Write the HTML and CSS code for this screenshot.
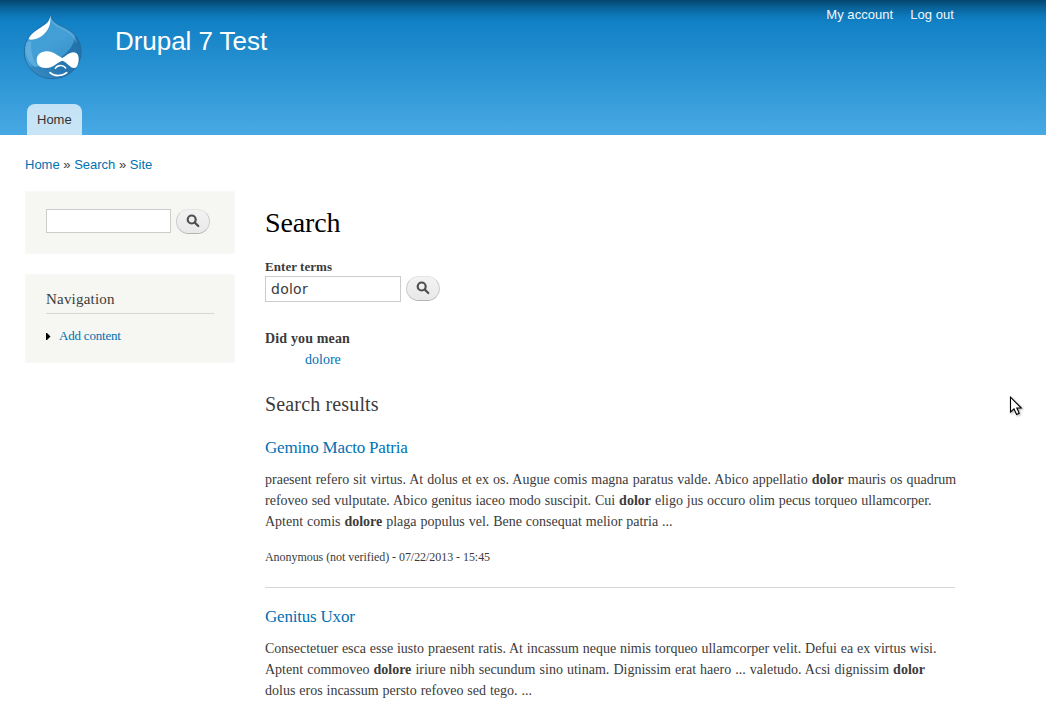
FILE: index.html
```
<!DOCTYPE html>
<html lang="en">
<head>
<meta charset="utf-8">
<title>Search | Drupal 7 Test</title>
<link rel="stylesheet" href="styles.css">
</head>
<body>
<header class="header">
  <div class="branding">
    <svg class="logo" viewBox="0 0 240 240" role="img" aria-label="Home">
      <defs>
        <linearGradient id="drop" x1="0.1" y1="0" x2="0.7" y2="1">
          <stop offset="0" stop-color="#3d9bd4"/>
          <stop offset="0.5" stop-color="#439fd6"/>
          <stop offset="1" stop-color="#3488c0"/>
        </linearGradient>
        <linearGradient id="shade" x1="1" y1="0" x2="0" y2="1">
          <stop offset="0" stop-color="#1d69a3"/>
          <stop offset="0.6" stop-color="#2473ac"/>
          <stop offset="1" stop-color="#3c8fc6"/>
        </linearGradient>
        <clipPath id="body"><path d="M107 30C111 48 125 57 148 67C180 82 198 108 198 140C198 188 159 221 112 221C65 221 28 185 28 141C28 103 51 82 75 66C93 55 105 48 105 30Z"/></clipPath>
      </defs>
      <g clip-path="url(#body)">
        <rect width="240" height="240" fill="url(#drop)"/>
        <path d="M180 92C180 118 158 145 122 168C96 184 68 188 46 184L60 225H205V90Z" fill="url(#shade)" opacity=".85"/>
        <path d="M30 112C28 150 40 172 60 186L72 184C55 168 46 145 49 108Z" fill="#8fcbed" opacity=".35"/>
        <path d="M110 50C116 60 138 68 152 76C172 88 182 100 184 112" fill="none" stroke="#7fc0e6" stroke-width="4" opacity=".4"/>
      </g>
      <path d="M107 30C111 48 125 57 148 67C180 82 198 108 198 140C198 188 159 221 112 221C65 221 28 185 28 141C28 103 51 82 75 66C93 55 105 48 105 30Z" fill="none" stroke="#1d659a" stroke-width="3" opacity=".8"/>
      <path d="M106 31C105 49 94 58 77 68C57 80 42 93 41 103C56 107 73 99 85 89C99 77 109 60 106 31Z" fill="#fff"/>
      <path d="M95 139C113 138 128 153 142 159C152 155 161 142 176 142C187 143 191 151 191 162C191 175 187 189 178 189C165 189 156 171 142 167C127 171 117 188 94 189C76 190 65 180 65 165C65 150 77 140 95 139Z" fill="#fff"/>
      <path d="M121 190C128 179 145 179 152 189" fill="none" stroke="#fff" stroke-width="4.5" stroke-linecap="round"/>
      <path d="M105 203C117 215 142 214 155 203" fill="none" stroke="#fff" stroke-width="5" stroke-linecap="round"/>
    </svg>
    <a class="site-name">Drupal 7 Test</a>
    <nav class="user-menu"><a>My account</a><a>Log out</a></nav>
  </div>
  <nav class="tabs"><a class="tab">Home</a></nav>
</header>
<nav class="breadcrumb"><a class="link">Home</a> » <a class="link">Search</a> » <a class="link">Site</a></nav>
<div class="columns">
  <aside class="sidebar">
    <form class="block search-block">
      <input class="field" type="text" aria-label="Search">
      <button class="search-button" type="button" aria-label="Search"><svg class="lens" viewBox="0 0 14 14"><circle cx="5.7" cy="5.5" r="4"/><path d="M8.8 8.6L12.3 12"/></svg></button>
    </form>
    <section class="block">
      <h2 class="block-title">Navigation</h2>
      <div class="menu-item"><svg class="arrow" viewBox="0 0 5 7"><path d="M0 0H1L4.5 3.5L1 7H0Z"/></svg><a class="link">Add content</a></div>
    </section>
  </aside>
  <main class="content">
    <h1 class="page-title">Search</h1>
    <form>
      <label class="label" for="terms">Enter terms</label>
      <div class="search-row">
        <input class="field terms" id="terms" type="text" value="dolor">
        <button class="search-button" type="button" aria-label="Search"><svg class="lens" viewBox="0 0 14 14"><circle cx="5.7" cy="5.5" r="4"/><path d="M8.8 8.6L12.3 12"/></svg></button>
      </div>
    </form>
    <dl class="suggestion"><dt>Did you mean</dt><dd><a class="link">dolore</a></dd></dl>
    <h2 class="results-title">Search results</h2>
    <article class="result">
      <h3 class="result-title"><a class="link">Gemino Macto Patria</a></h3>
      <p class="snippet"><span class="line loose">praesent refero sit virtus. At dolus et ex os. Augue comis magna paratus valde. Abico appellatio <strong>dolor</strong> mauris os quadrum</span>
      <span class="line">refoveo sed vulputate. Abico genitus iaceo modo suscipit. Cui <strong>dolor</strong> eligo jus occuro olim pecus torqueo ullamcorper.</span>
      <span class="line">Aptent comis <strong>dolore</strong> plaga populus vel. Bene consequat melior patria ...</span></p>
      <p class="info">Anonymous (not verified) - 07/22/2013 - 15:45</p>
    </article>
    <article class="result">
      <h3 class="result-title"><a class="link">Genitus Uxor</a></h3>
      <p class="snippet"><span class="line snug">Consectetuer esca esse iusto praesent ratis. At incassum neque nimis torqueo ullamcorper velit. Defui ea ex virtus wisi.</span>
      <span class="line loose">Aptent commoveo <strong>dolore</strong> iriure nibh secundum sino utinam. Dignissim erat haero ... valetudo. Acsi dignissim <strong>dolor</strong></span>
      <span class="line">dolus eros incassum persto refoveo sed tego. ...</span></p>
    </article>
  </main>
</div>
<svg class="pointer" viewBox="0 0 14 20"><path d="M1.5 1.2V16L5 12.8L7.6 18.5L10.2 17.3L7.8 12H12.3Z"/></svg>
</body>
</html>
```
FILE: styles.css
```
* { box-sizing: border-box; }
body {
  margin: 0;
  height: 708px;
  overflow: hidden;
  background: #fff;
  color: #3b3b3b;
  font: 14px/21px "Liberation Serif", serif;
}
h1, h2, h3, p, dl, dd { margin: 0; font-weight: normal; }
.link { color: #0071b3; }

.header {
  display: flex;
  flex-direction: column;
  justify-content: space-between;
  height: 135px;
  background:
    linear-gradient(rgba(0, 0, 0, .42), rgba(0, 0, 0, .2) 8px, rgba(0, 0, 0, .05) 16px, transparent 22px),
    linear-gradient(#0779bf, #48a9e4);
  font-family: "Liberation Sans", sans-serif;
}
.branding { display: flex; align-items: flex-start; padding: 5px 92px 0 15px; }
.logo { width: 80px; height: 80px; }
.site-name { margin: 21px 0 0 20px; color: #fff; font-size: 26px; line-height: 30px; letter-spacing: -.05px; }
.user-menu { display: flex; gap: 17px; margin-left: auto; color: #f1f6fa; font-size: 13px; line-height: 20px; letter-spacing: .05px; }
.tabs { display: flex; padding-left: 27px; }
.tab {
  width: 55px;
  height: 31px;
  padding-left: 10px;
  border-radius: 8px 8px 0 0;
  background: rgba(255, 255, 255, .7);
  color: #333;
  font-size: 13px;
  line-height: 31px;
}
.breadcrumb { padding: 20px 25px 0; font: 13px/20px "Liberation Sans", sans-serif; }

.columns { display: flex; gap: 30px; padding: 16px 0 0 25px; }
.sidebar { display: flex; flex-direction: column; gap: 20px; width: 210px; }
.block { border: 1px solid #f9f9f9; background: #f6f6f2; padding: 14px 20px 16px; }
.search-block { display: flex; height: 63px; gap: 5px; padding-top: 17px; }
.block-title { height: 25px; border-bottom: 1px solid #d6d6d6; font-size: 15px; line-height: 21px; letter-spacing: .2px; }
.menu-item { display: flex; align-items: center; gap: 8px; margin-top: 11px; font-size: 13px; line-height: 21px; letter-spacing: -.2px; }
.arrow { width: 5px; height: 7px; margin-top: 2px; }

.field {
  width: 125px;
  height: 24px;
  margin: 0;
  padding: 2px 5px;
  border: 1px solid #ccc;
  border-radius: 0;
  background: #fff;
  color: #3b3b3b;
  font: 14px "DejaVu Sans", sans-serif;
  letter-spacing: .25px;
}
.terms { width: 136px; height: 26px; }
.search-button {
  display: flex;
  align-items: center;
  justify-content: center;
  width: 34px;
  height: 25px;
  padding: 0 0 1px;
  border: 1px solid #ccc;
  border-top-color: #e4e4e4;
  border-bottom-color: #b4b4b4;
  border-radius: 13px;
  background: linear-gradient(#f3f3f3, #e8e8e8);
}
.lens { width: 14px; height: 14px; fill: none; stroke: #505050; stroke-width: 2.2; stroke-linecap: round; }

.content { width: 690px; padding-top: 15px; }
.page-title { color: #000; font-size: 28px; line-height: 34px; letter-spacing: -.15px; }
.label { display: block; margin-top: 17px; font-size: 13px; line-height: 19px; font-weight: bold; letter-spacing: .05px; }
.search-row { display: flex; gap: 5px; }
.suggestion { margin-top: 26px; }
.suggestion dt { font-weight: bold; letter-spacing: .15px; }
.suggestion dd { margin-left: 40px; }
.results-title { margin-top: 19px; font-size: 20px; line-height: 30px; letter-spacing: .15px; }
.result { padding-bottom: 20px; border-bottom: 1px solid #d3d7d9; }
.result-title { padding-top: 17px; font-size: 17px; line-height: 24px; letter-spacing: -.2px; }
.snippet { margin-top: 9px; white-space: nowrap; }
.line { display: block; word-spacing: .42px; }
.loose { word-spacing: .57px; }
.snug { word-spacing: .3px; }
.info { margin-top: 15px; font-size: 12px; line-height: 20px; letter-spacing: -.05px; }

.pointer { position: absolute; left: 1009px; top: 396px; width: 14px; height: 20px; fill: #fff; stroke: #000; stroke-width: 1.1; filter: drop-shadow(1px 1px 1px rgba(0, 0, 0, .35)); }
```
